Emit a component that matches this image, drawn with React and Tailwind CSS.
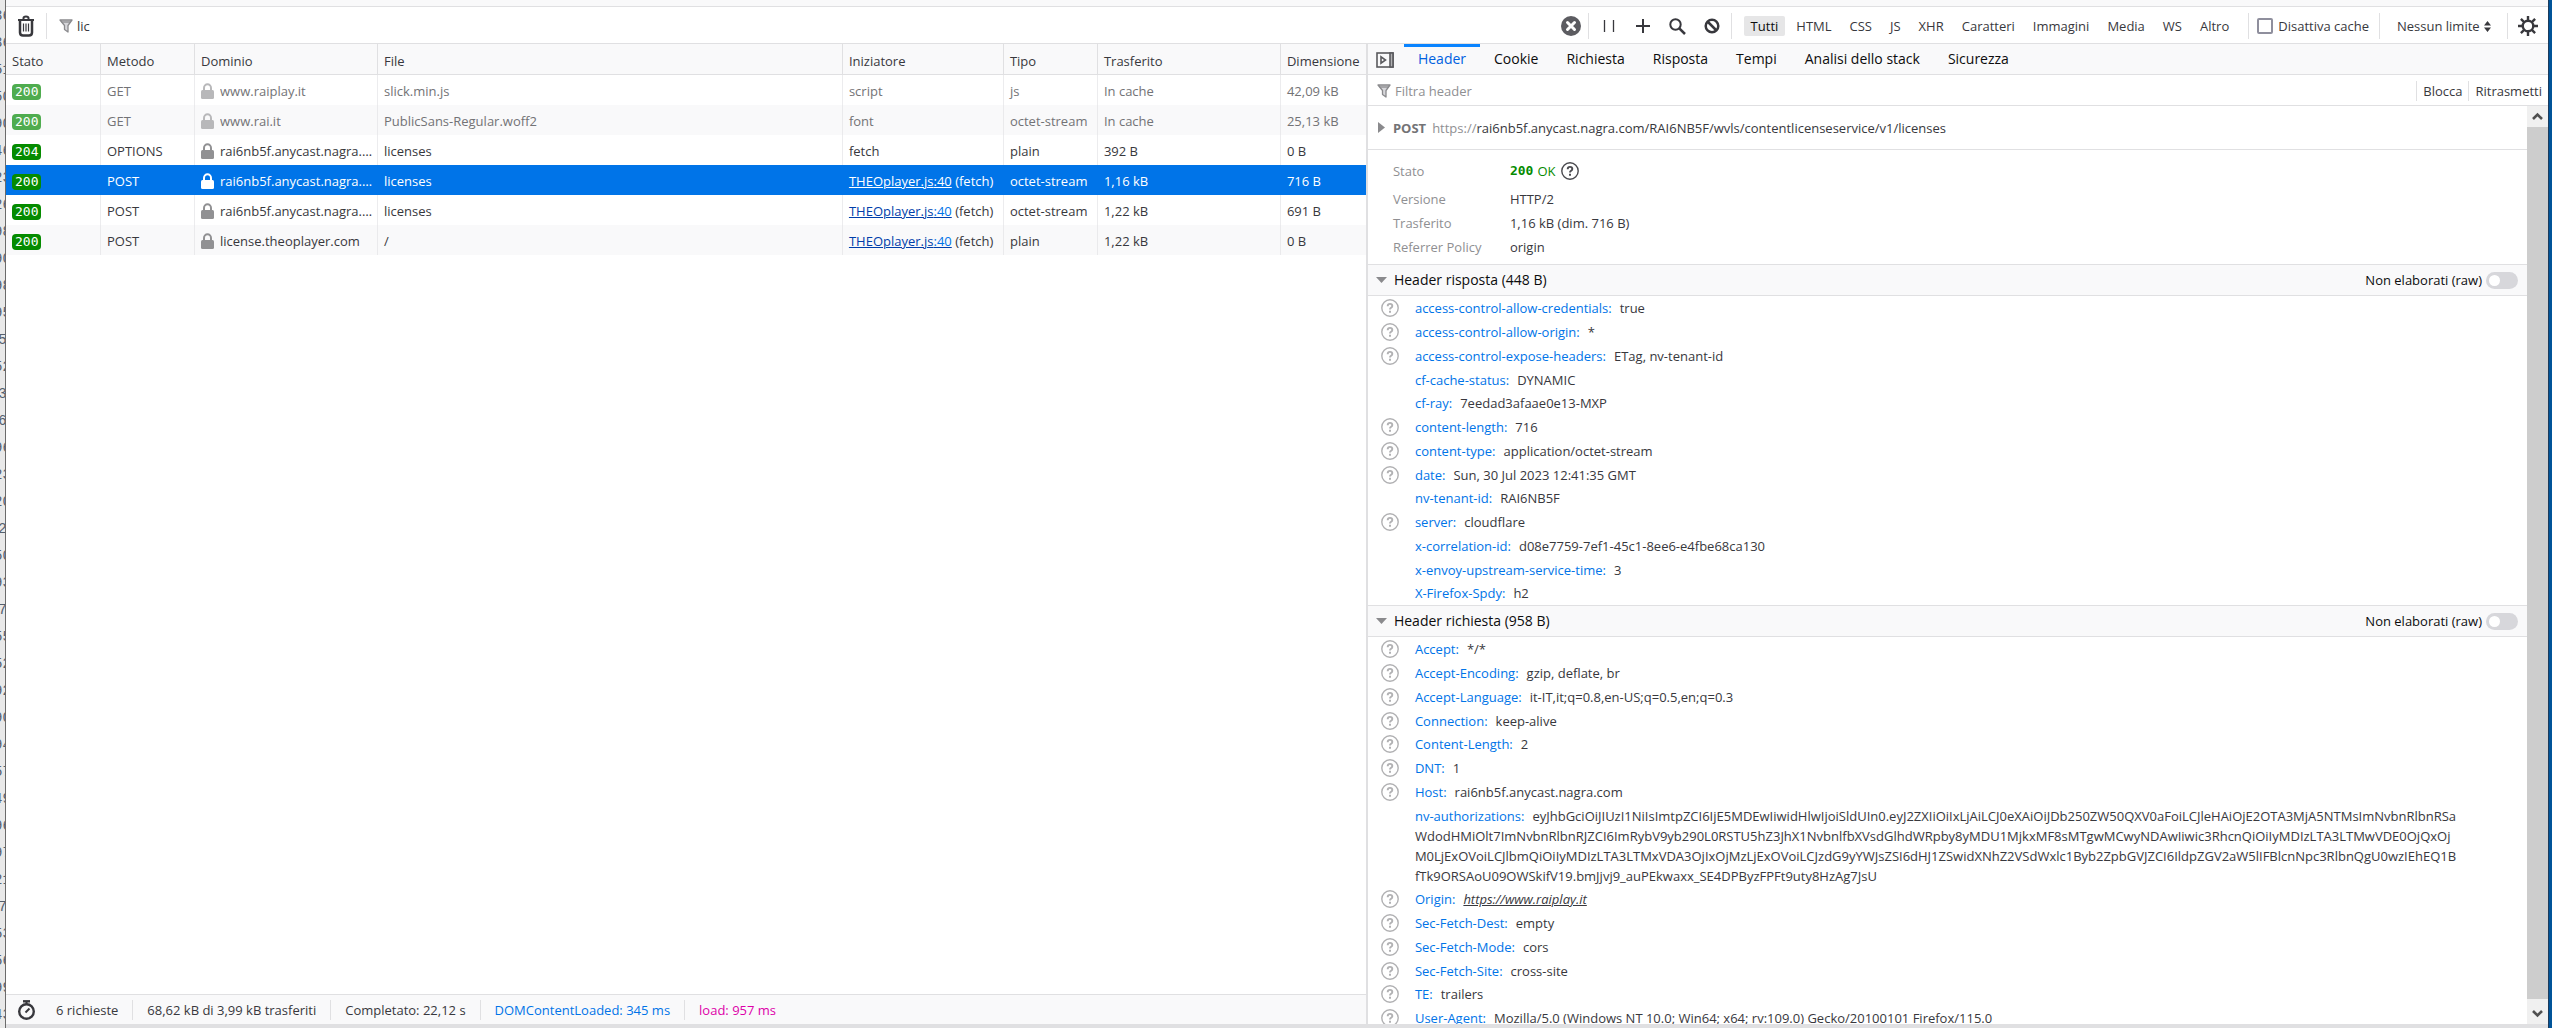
import React, { useState } from "react";

const requests = [
  { status: 200, method: "GET", domain: "www.raiplay.it", file: "slick.min.js", initiator: "script", type: "js", transferred: "In cache", size: "42,09 kB", cached: true },
  { status: 200, method: "GET", domain: "www.rai.it", file: "PublicSans-Regular.woff2", initiator: "font", type: "octet-stream", transferred: "In cache", size: "25,13 kB", cached: true },
  { status: 204, method: "OPTIONS", domain: "rai6nb5f.anycast.nagra.com", file: "licenses", initiator: "fetch", type: "plain", transferred: "392 B", size: "0 B" },
  { status: 200, method: "POST", domain: "rai6nb5f.anycast.nagra.com", file: "licenses", script: true, initiator: "(fetch)", type: "octet-stream", transferred: "1,16 kB", size: "716 B" },
  { status: 200, method: "POST", domain: "rai6nb5f.anycast.nagra.com", file: "licenses", script: true, initiator: "(fetch)", type: "octet-stream", transferred: "1,22 kB", size: "691 B" },
  { status: 200, method: "POST", domain: "license.theoplayer.com", file: "/", script: true, initiator: "(fetch)", type: "plain", transferred: "1,22 kB", size: "0 B" },
];

const responseHeaders = [
  { name: "access-control-allow-credentials", value: "true", help: true },
  { name: "access-control-allow-origin", value: "*", help: true },
  { name: "access-control-expose-headers", value: "ETag, nv-tenant-id", help: true },
  { name: "cf-cache-status", value: "DYNAMIC" },
  { name: "cf-ray", value: "7eedad3afaae0e13-MXP" },
  { name: "content-length", value: "716", help: true },
  { name: "content-type", value: "application/octet-stream", help: true },
  { name: "date", value: "Sun, 30 Jul 2023 12:41:35 GMT", help: true },
  { name: "nv-tenant-id", value: "RAI6NB5F" },
  { name: "server", value: "cloudflare", help: true },
  { name: "x-correlation-id", value: "d08e7759-7ef1-45c1-8ee6-e4fbe68ca130" },
  { name: "x-envoy-upstream-service-time", value: "3" },
  { name: "X-Firefox-Spdy", value: "h2" },
];

const token = [
  "eyJhbGciOiJIUzI1NiIsImtpZCI6IjE5MDEwIiwidHlwIjoiSldUIn0.eyJ2ZXIiOiIxLjAiLCJ0eXAiOiJDb250ZW50QXV0aFoiLCJleHAiOjE2OTA3MjA5NTMsImNvbnRlbnRSa",
  "WdodHMiOlt7ImNvbnRlbnRJZCI6ImRybV9yb290L0RSTU5hZ3JhX1NvbnlfbXVsdGlhdWRpby8yMDU1MjkxMF8sMTgwMCwyNDAwIiwic3RhcnQiOiIyMDIzLTA3LTMwVDE0OjQxOj",
  "M0LjExOVoiLCJlbmQiOiIyMDIzLTA3LTMxVDA3OjIxOjMzLjExOVoiLCJzdG9yYWJsZSI6dHJ1ZSwidXNhZ2VSdWxlc1Byb2ZpbGVJZCI6IldpZGV2aW5lIFBlcnNpc3RlbnQgU0wzIEhEQ1B",
  "fTk9ORSAoU09OWSkifV19.bmJjvj9_auPEkwaxx_SE4DPByzFPFt9uty8HzAg7JsU",
];

const requestHeaders = [
  { name: "Accept", value: "*/*", help: true },
  { name: "Accept-Encoding", value: "gzip, deflate, br", help: true },
  { name: "Accept-Language", value: "it-IT,it;q=0.8,en-US;q=0.5,en;q=0.3", help: true },
  { name: "Connection", value: "keep-alive", help: true },
  { name: "Content-Length", value: "2", help: true },
  { name: "DNT", value: "1", help: true },
  { name: "Host", value: "rai6nb5f.anycast.nagra.com", help: true },
  { name: "nv-authorizations", lines: token },
  { name: "Origin", value: "https://www.raiplay.it", help: true, link: true },
  { name: "Sec-Fetch-Dest", value: "empty", help: true },
  { name: "Sec-Fetch-Mode", value: "cors", help: true },
  { name: "Sec-Fetch-Site", value: "cross-site", help: true },
  { name: "TE", value: "trailers", help: true },
  { name: "User-Agent", value: "Mozilla/5.0 (Windows NT 10.0; Win64; x64; rv:109.0) Gecko/20100101 Firefox/115.0", help: true },
];

const filters = ["Tutti", "HTML", "CSS", "JS", "XHR", "Caratteri", "Immagini", "Media", "WS", "Altro"];
const tabs = ["Header", "Cookie", "Richiesta", "Risposta", "Tempi", "Analisi dello stack", "Sicurezza"];

// Line numbers of the window behind
const gutter = [36, 36, 51, 50, 90, 46, 23, 26, 98, 90, 98, 95, 5, 52, 3, 6, 96, 23, 20, 2, 50, 93, 7, 55, 52, 92, 90, 94, 57, 49, 96, 97, 21, 7, 53, 56, 99, 43];

const TrashIcon = () => (
  <svg width="18" height="22" viewBox="0 0 18 22" fill="none" stroke="#38383d" strokeWidth="2">
    <path d="M1 5h16M6.500 4.500V3q0-1.500 2.500-1.500T11.500 3v1.500" />
    <path d="M3 6v11.500q0 3 3 3h6q3 0 3-3V6" strokeWidth="2.500" />
    <path d="M6.500 8.500v8M9 8.500v8M11.500 8.500v8" strokeWidth="1.200" />
  </svg>
);

const FunnelIcon = () => (
  <svg width="14" height="14" viewBox="0 0 14 14" fill="#d7d7db" stroke="#8a8a8d" strokeWidth="1.300" strokeLinejoin="round">
    <path d="M1 1h12L9 6.500V13L5.500 10.500v-4z" />
    <path d="M2.500 3h9" />
  </svg>
);

const LockIcon = ({ className }) => (
  <svg width="13" height="16" viewBox="0 0 13 16" className={`shrink-0 ${className}`}>
    <path d="M3 8V5a3.500 3.700 0 0 1 7 0v3" fill="none" stroke="currentColor" strokeWidth="2" />
    <rect x="0" y="7" width="13" height="9" rx="1.500" fill="currentColor" />
  </svg>
);

const HelpIcon = ({ color = "#b1b1b3" }) => (
  <svg width="18" height="18" viewBox="0 0 18 18" fill="none" stroke={color}>
    <circle cx="9" cy="9" r="8.200" strokeWidth="1.400" />
    <path d="M6.700 7.200q0-2.300 2.300-2.300t2.300 2q0 1.200-1.200 1.900-1.100.7-1.100 1.700" strokeWidth="1.900" />
    <path d="M9 11.800v1.900" strokeWidth="2" />
  </svg>
);

const GearIcon = () => (
  <svg width="20" height="20" viewBox="0 0 20 20" fill="none" stroke="#38383d">
    <circle cx="10" cy="10" r="5.300" strokeWidth="2.400" />
    <path
      d="M10 0v4.500M10 15.500V20M0 10h4.500M15.500 10H20M2.900 2.900l3.200 3.200M13.900 13.900l3.200 3.200M2.900 17.100l3.200-3.200M13.900 6.100l3.200-3.200"
      strokeWidth="2.400"
    />
  </svg>
);

const Divider = ({ className = "" }) => (
  <span className={`w-px shrink-0 bg-[#e0e0e2] ${className}`}></span>
);

const HeaderRow = ({ item }) => (
  <li className="flex min-h-6 shrink-0 items-start nth-[4n]:min-h-[23px]">
    <span className="flex h-[23px] w-[34px] shrink-0 items-center">{item.help && <HelpIcon />}</span>
    <div className="pt-0.5 pb-px leading-5 text-[#38383d]">
      <span className="mr-2 text-[#0074e8]">{item.name}:</span>
      {item.link && (
        <a href="https://www.raiplay.it" className="italic underline">
          {item.value}
        </a>
      )}
      {item.lines &&
        item.lines.map((line, i) => (
          <React.Fragment key={line}>
            {i > 0 && <br />}
            {line}
          </React.Fragment>
        ))}
      {!item.link && !item.lines && item.value}
    </div>
  </li>
);

const HeaderSection = ({ id, title, items }) => {
  const [raw, setRaw] = useState(false);

  return (
    <section>
      <div className="flex h-8 items-center border-y border-[#e0e0e2] bg-[#f9f9fa] pr-[9px] pl-2 text-[#0c0c0d]">
        <button className="flex items-center gap-[7px] text-sm">
          <svg width="11" height="6" viewBox="0 0 11 6" fill="#8a8a8d">
            <path d="M0 0h11L5.500 6z" />
          </svg>
          {title}
        </button>
        <label htmlFor={id} className="ml-auto pr-1">
          Non elaborati (raw)
        </label>
        <input
          id={id}
          type="checkbox"
          checked={raw}
          onChange={(e) => setRaw(e.target.checked)}
          className="h-[17px] w-8 appearance-none rounded-full bg-[#d7d7db] before:mt-[3px] before:ml-[3px] before:block before:size-[11px] before:rounded-full before:bg-white checked:bg-[#0074e8] checked:before:ml-[18px]"
        />
      </div>
      <ul className="flex flex-col pl-[13px]">
        {items.map((item) => (
          <HeaderRow key={item.name} item={item} />
        ))}
      </ul>
    </section>
  );
};

const Toolbar = () => {
  const [search, setSearch] = useState("lic");
  const [active, setActive] = useState("Tutti");
  const [noCache, setNoCache] = useState(false);

  return (
    <div className="flex h-[37px] shrink-0 items-center border-b border-[#e0e0e2] bg-white pt-0.5">
      <button aria-label="Svuota" className="ml-[11px]">
        <TrashIcon />
      </button>
      <Divider className="ml-[11px] h-[26px]" />
      <label htmlFor="search" className="ml-3">
        <FunnelIcon />
      </label>
      <input
        id="search"
        value={search}
        onChange={(e) => setSearch(e.target.value)}
        className="ml-1 min-w-0 flex-1 outline-none"
      />
      <button aria-label="Cancella filtro" onClick={() => setSearch("")}>
        <svg width="20" height="20" viewBox="0 0 20 20">
          <circle cx="10" cy="10" r="10" fill="#5c5c61" />
          <path d="M6.500 6.500l7 7M13.500 6.500l-7 7" stroke="#fff" strokeWidth="3" strokeLinecap="round" />
        </svg>
      </button>
      <Divider className="ml-[7px] h-[26px]" />
      <button aria-label="Pausa" className="ml-3.5">
        <svg width="12" height="14" viewBox="0 0 12 14" stroke="#38383d" strokeWidth="1.300">
          <path d="M1.500 1v12M10.500 1v12" />
        </svg>
      </button>
      <button aria-label="Nuova richiesta" className="ml-[21px]">
        <svg width="14" height="14" viewBox="0 0 14 14" stroke="#38383d" strokeWidth="2">
          <path d="M7 0v14M0 7h14" />
        </svg>
      </button>
      <button aria-label="Cerca" className="ml-[19px]">
        <svg width="17" height="17" viewBox="0 0 17 17" fill="none" stroke="#38383d" strokeWidth="2">
          <circle cx="6.500" cy="6.500" r="5.200" />
          <path d="M10.300 10.300L16 16" strokeWidth="2.500" />
        </svg>
      </button>
      <button aria-label="Blocca richieste" className="ml-[18px]">
        <svg width="16" height="16" viewBox="0 0 16 16" fill="none" stroke="#38383d" strokeWidth="2.500">
          <circle cx="8" cy="8" r="6.300" />
          <path d="M3.500 3.500l9 9" />
        </svg>
      </button>
      <Divider className="ml-[11px] h-[26px]" />
      <div className="ml-3 flex gap-1">
        {filters.map((name) => (
          <button
            key={name}
            onClick={() => setActive(name)}
            className={`h-5 rounded-xs px-[7px] leading-5 ${
              active === name ? "bg-[#e6e6e7] text-[#0c0c0d]" : "text-[#38383d]"
            }`}
          >
            {name}
          </button>
        ))}
      </div>
      <Divider className="ml-3 h-[26px]" />
      <label className="ml-2 flex items-center gap-[5px]">
        <input
          type="checkbox"
          checked={noCache}
          onChange={(e) => setNoCache(e.target.checked)}
          className="size-4 appearance-none rounded-xs border-2 border-[#8f8f9d] bg-white checked:bg-[#0074e8]"
        />
        Disattiva cache
      </label>
      <Divider className="ml-2.5 h-[26px]" />
      <label className="ml-[17px] flex items-center">
        <select aria-label="Limitazione banda" className="appearance-none outline-none">
          <option>Nessun limite</option>
        </select>
        <svg width="7" height="11" viewBox="0 0 7 11" fill="#38383d" className="ml-1">
          <path d="M0 4.500h7L3.500 0zM0 6.500h7L3.500 11z" />
        </svg>
      </label>
      <Divider className="ml-4 h-[26px]" />
      <button aria-label="Impostazioni" className="mx-2.5">
        <GearIcon />
      </button>
    </div>
  );
};

const RequestList = () => {
  const [selected, setSelected] = useState(3);
  const cell = "overflow-hidden border-r border-[#e0e0e2]/60 pt-px pr-1 pl-1.5 text-ellipsis last:border-r-0";
  const head = "border-r border-b border-[#e0e0e2] pt-[3px] pr-1 pl-1.5 font-normal last:border-r-0";

  return (
    <div className="flex min-w-0 flex-[1361] flex-col border-r-2 border-[#e0e0e2]">
      <div className="min-h-0 flex-1 bg-white">
        <table className="w-full table-fixed border-separate border-spacing-0 text-left whitespace-nowrap">
          <thead className="bg-[#f9f9fa]">
            <tr className="h-[31px]">
              <th className={`w-[95px] ${head}`}>Stato</th>
              <th className={`w-[94px] ${head}`}>Metodo</th>
              <th className={`w-[183px] ${head}`}>Dominio</th>
              <th className={head}>File</th>
              <th className={`w-[161px] ${head}`}>Iniziatore</th>
              <th className={`w-[94px] ${head}`}>Tipo</th>
              <th className={`w-[183px] ${head}`}>Trasferito</th>
              <th className={`w-[85px] ${head}`}>Dimensione</th>
            </tr>
          </thead>
          <tbody>
            {requests.map((req, i) => {
              const isSelected = i === selected;
              const td = `${cell} ${isSelected ? "border-transparent" : ""}`;
              return (
                <tr
                  key={i}
                  onClick={() => setSelected(i)}
                  className={`h-[30px] ${
                    isSelected
                      ? "bg-[#0074e8] text-white"
                      : `${req.cached ? "text-[#737376]" : "text-[#38383d]"} even:bg-[#f9f9fa]`
                  }`}
                >
                  <td className={td}>
                    <span
                      className={`inline-block h-4 rounded-sm px-[3px] align-middle font-['DejaVu_Sans_Mono',monospace] leading-4 text-white ${
                        req.cached ? "bg-[#4fac4f]" : "bg-[#058b00]"
                      }`}
                    >
                      {req.status}
                    </span>
                  </td>
                  <td className={td}>{req.method}</td>
                  <td className={td}>
                    <div className="flex items-center gap-1.5">
                      <LockIcon
                        className={isSelected ? "text-white" : req.cached ? "text-[#b8b8ba]" : "text-[#919193]"}
                      />
                      <span className="truncate">{req.domain}</span>
                    </div>
                  </td>
                  <td className={td}>{req.file}</td>
                  <td className={td}>
                    {req.script && (
                      <>
                        <a
                          href="#THEOplayer.js"
                          className={`underline ${isSelected ? "text-white" : "text-[#003eaa]"}`}
                        >
                          THEOplayer.js
                          <span className={isSelected ? "text-white" : "text-[#0074e8]"}>:40</span>
                        </a>{" "}
                      </>
                    )}
                    {req.initiator}
                  </td>
                  <td className={td}>{req.type}</td>
                  <td className={td}>{req.transferred}</td>
                  <td className={td}>{req.size}</td>
                </tr>
              );
            })}
          </tbody>
        </table>
      </div>

      {/* Summary */}
      <div className="flex h-[30px] shrink-0 items-center border-t border-[#e0e0e2] bg-[#f9f9fa] pl-[11px]">
        <button aria-label="Analisi prestazioni">
          <svg width="19" height="20" viewBox="0 0 19 20" fill="none" stroke="#38383d">
            <circle cx="9.500" cy="11.500" r="7.300" strokeWidth="2.400" />
            <path d="M6 1.300h7" strokeWidth="2.400" />
            <path d="M9.500 2v3" strokeWidth="2" />
            <path d="M8.500 12.500l4-4" strokeWidth="2" />
          </svg>
        </button>
        <span className="ml-5 pr-3.5">6 richieste</span>
        <Divider className="h-5" />
        <span className="px-3.5">68,62 kB di 3,99 kB trasferiti</span>
        <Divider className="h-5" />
        <span className="px-3.5">Completato: 22,12 s</span>
        <Divider className="h-5" />
        <span className="px-3.5 text-[#0074e8]">DOMContentLoaded: 345 ms</span>
        <Divider className="h-5" />
        <span className="px-3.5 text-[#dd00a9]">load: 957 ms</span>
      </div>
    </div>
  );
};

const DetailsPanel = () => {
  const [tab, setTab] = useState("Header");

  return (
    <div className="flex min-w-0 flex-[1181] flex-col bg-white">
      <div className="flex h-[31px] shrink-0 border-b border-[#e0e0e2] bg-[#f9f9fa]">
        <button aria-label="Nascondi dettagli" className="mr-2.5 ml-2 pt-0.5">
          <svg width="18" height="16" viewBox="0 0 18 16" fill="none" stroke="#5a5a5e" strokeWidth="1.600">
            <rect x="1" y="1" width="16" height="14" />
            <path d="M14 1h3v14h-3z" fill="#b1b1b3" />
            <path d="M5 4.800v6.400L9.500 8z" />
          </svg>
        </button>
        {tabs.map((name) => (
          <button
            key={name}
            onClick={() => setTab(name)}
            className={`border-t-3 px-3.5 pb-[3px] text-sm ${
              tab === name ? "border-[#0a84ff] text-[#0061e0]" : "border-transparent text-[#0c0c0d]"
            }`}
          >
            {name}
          </button>
        ))}
      </div>

      <div className="flex h-[31px] shrink-0 items-center border-b border-[#e0e0e2] pt-px pl-[9px]">
        <label htmlFor="header-filter">
          <FunnelIcon />
        </label>
        <input
          id="header-filter"
          placeholder="Filtra header"
          className="ml-1 min-w-0 flex-1 outline-none placeholder:text-[#8f8f92]"
        />
        <Divider className="h-5" />
        <button className="px-1.5">Blocca</button>
        <Divider className="h-5" />
        <button className="px-1.5">Ritrasmetti</button>
      </div>

      <div className="flex min-h-0 flex-1">
        <div className="min-w-0 flex-1 overflow-hidden">
          <div className="flex h-11 items-center border-b border-[#e0e0e2] pl-2.5">
            <svg width="7" height="11" viewBox="0 0 7 11" fill="#8a8a8d">
              <path d="M0 0v11l7-5.500z" />
            </svg>
            <span className="ml-2 font-bold text-[#737376]">POST</span>
            <span className="ml-1.5">
              <span className="text-[#8f8f92]">https://</span>
              rai6nb5f.anycast.nagra.com/RAI6NB5F/wvls/contentlicenseservice/v1/licenses
            </span>
          </div>

          <dl className="grid grid-cols-[117px_1fr] pt-[5px] pb-[5px] pl-[25px] leading-6">
            <dt className="py-1 text-[#8f8f92]">Stato</dt>
            <dd className="flex items-center gap-1 py-1 text-[#058b00]">
              <span className="font-['DejaVu_Sans_Mono',monospace] font-bold">200</span>
              <span className="mr-0.5">OK</span>
              <HelpIcon color="#4a4a4f" />
            </dd>
            <dt className="text-[#8f8f92]">Versione</dt>
            <dd>HTTP/2</dd>
            <dt className="text-[#8f8f92]">Trasferito</dt>
            <dd>1,16 kB (dim. 716 B)</dd>
            <dt className="text-[#8f8f92]">Referrer Policy</dt>
            <dd>origin</dd>
          </dl>

          <HeaderSection id="raw-response" title="Header risposta (448 B)" items={responseHeaders} />
          <HeaderSection id="raw-request" title="Header richiesta (958 B)" items={requestHeaders} />
        </div>

        {/* Scrollbar */}
        <div className="flex w-[21px] shrink-0 flex-col bg-[#f0f0f0]">
          <button aria-label="Scorri su" className="flex h-[21px] items-center justify-center">
            <svg width="11" height="9" viewBox="0 0 11 9" fill="none" stroke="#505050" strokeWidth="2.600">
              <path d="M1 7l4.500-4.500L10 7" />
            </svg>
          </button>
          <div className="flex-1 bg-[#cdcdcd]"></div>
          <button aria-label="Scorri giù" className="flex h-[25px] items-center justify-center pt-1">
            <svg width="11" height="9" viewBox="0 0 11 9" fill="none" stroke="#505050" strokeWidth="2.600">
              <path d="M1 2l4.500 4.500L10 2" />
            </svg>
          </button>
        </div>
      </div>
    </div>
  );
};

const App = () => {
  return (
    <div className="flex h-screen overflow-hidden bg-white font-['Open_Sans',sans-serif] text-[13px] leading-5 text-[#38383d]">
      <div className="flex w-1.5 shrink-0 flex-col items-center overflow-hidden border-r border-[#6b6b6b] bg-[#e9e9e9] pt-[3px] font-['Liberation_Mono',monospace] text-sm text-[#55606e]">
        {gutter.map((n, i) => (
          <span key={i} className="h-[27px] shrink-0 leading-[27px]">
            {n}
          </span>
        ))}
      </div>

      <div className="flex min-w-0 flex-1 flex-col">
        <div className="h-[7px] shrink-0 border-b border-[#e0e0e2] bg-[#f9f9fa]"></div>
        <Toolbar />
        <div className="flex min-h-0 flex-1">
          <RequestList />
          <DetailsPanel />
        </div>
        <div className="h-1 shrink-0 bg-[#e0e0e2]"></div>
      </div>

      <div className="w-1 shrink-0 border-l border-[#1d3b5c] bg-[#005499]"></div>
    </div>
  );
};

export default App;
